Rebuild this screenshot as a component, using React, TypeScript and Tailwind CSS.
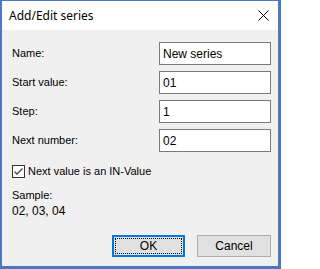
import React from 'react';

const Field: React.FC<{ label: string; value: string }> = ({ label, value }) => (
  <div className="flex items-center h-[23px]">
    <span className="flex-1">{label}</span>
    <div className="w-[112px] h-[23px] border border-[#7a7a7a] bg-white flex items-center pl-[3px] text-[12px]">
      {value}
    </div>
  </div>
);

const App: React.FC = () => {
  return (
    <div
      className="w-[281px] h-[269px] flex flex-col bg-[#f0f0f0] border-t border-l-2 border-r-[3px] border-b-[3px] border-[#4a78c8] text-[11px] text-black"
      style={{ fontFamily: '"Liberation Sans", Arial, sans-serif' }}
    >
      <div className="h-[29px] bg-white flex items-center justify-between pl-[7px] pr-[9px]">
        <span className="text-[12px]" style={{ fontFamily: '"Noto Sans", "Open Sans", sans-serif' }}>
          Add/Edit series
        </span>
        <svg width="11" height="11" viewBox="0 0 11 11">
          <path d="M0.5 0.5 L10.5 10.5 M10.5 0.5 L0.5 10.5" stroke="#000" strokeWidth="1" />
        </svg>
      </div>
      <div className="flex-1 flex flex-col pl-[10px] pr-[7px] pt-[12px] pb-[9px]">
        <div className="flex flex-col gap-[6px]">
          <Field label="Name:" value="New series" />
          <Field label="Start value:" value="01" />
          <Field label="Step:" value="1" />
          <Field label="Next number:" value="02" />
        </div>
        <label className="flex items-center gap-[3px] mt-[13px] h-[13px]">
          <svg width="13" height="13" viewBox="0 0 13 13">
            <rect x="0.5" y="0.5" width="12" height="12" fill="#fff" stroke="#333" />
            <path d="M2.5 6.5 L5 9 L10.5 3.5" fill="none" stroke="#444" strokeWidth="1.3" />
          </svg>
          <span>Next value is an IN-Value</span>
        </label>
        <div className="mt-[9px] leading-[16px]">
          <div>Sample:</div>
          <div className="text-[12px]">02, 03, 04</div>
        </div>
        <div className="mt-auto flex justify-end gap-[12px]">
          <button className="w-[73px] h-[22px] border-2 border-[#0078d7] bg-[#e1e1e1] p-[1px]">
            <div className="w-full h-full border border-dotted border-black flex items-center justify-center text-[12px]">
              OK
            </div>
          </button>
          <button className="w-[74px] h-[22px] border border-[#adadad] bg-[#e1e1e1] flex items-center justify-center text-[12px]">
            Cancel
          </button>
        </div>
      </div>
    </div>
  );
};

export default App;
